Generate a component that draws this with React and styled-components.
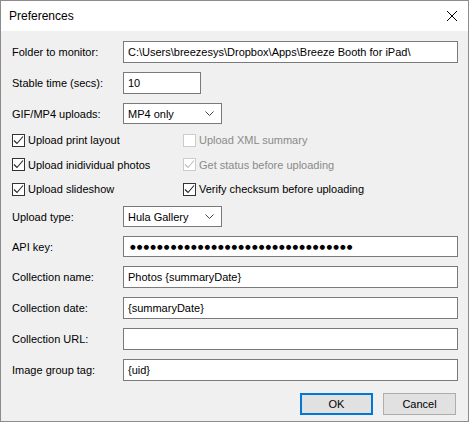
import React from 'react';
import styled, {createGlobalStyle} from 'styled-components';

const GlobalStyle = createGlobalStyle`
  html, body {
    margin: 0;
    padding: 0;
    background: #ffffff;
  }
  body {
    font-family: "Liberation Sans", Arial, sans-serif;
    font-size: 11px;
    color: #000;
  }
`;

const Window = styled.div`
  width: 469px;
  height: 422px;
  box-sizing: border-box;
  border: 1px solid #8c8c8c;
  background: #f0f0f0;
  display: flex;
  flex-direction: column;
`;

const TitleBar = styled.div`
  height: 30px;
  background: #fff;
  display: flex;
  align-items: center;
  justify-content: space-between;
  padding: 0 9px 0 8px;
  font-size: 12px;
  flex-shrink: 0;
`;

const CloseBtn = styled.div`
  width: 12px;
  height: 12px;
  display: flex;
  margin-right: 1px;
`;

const Body = styled.div`
  padding: 10px 10px 0 11px;
  display: flex;
  flex-direction: column;
`;

const Stack = styled.div`
  display: flex;
  flex-direction: column;
  gap: ${p => p.$gap}px;
`;

const Row = styled.div`
  display: grid;
  grid-template-columns: 111px 1fr;
  align-items: center;
  height: ${p => p.$h || 22}px;
`;

const Label = styled.div`
  white-space: nowrap;
`;

const Field = styled.div`
  box-sizing: border-box;
  height: ${p => p.$h || 22}px;
  width: ${p => (p.$w ? `${p.$w}px` : '100%')};
  background: #fff;
  border: 1px solid #7a7a7a;
  display: flex;
  align-items: center;
  padding-left: 4px;
  white-space: nowrap;
  overflow: hidden;
`;

const Select = styled(Field)`
  justify-content: space-between;
  padding-right: 7px;
`;

const Dots = styled.span`
  font-family: "DejaVu Sans", sans-serif;
  font-size: 6.5px;
  letter-spacing: 1.1px;
  padding-left: 2px;
`;

const CheckGrid = styled.div`
  display: grid;
  grid-template-columns: 171px 1fr;
  row-gap: 8.5px;
  margin: 8px 0 9px;
`;

const Check = styled.div`
  display: flex;
  align-items: center;
  gap: 3px;
  height: 16px;
  color: ${p => (p.$disabled ? '#8a8a8a' : '#000')};
`;

const Box = styled.div`
  box-sizing: border-box;
  width: 13px;
  height: 13px;
  background: #fff;
  border: 1px solid ${p => (p.$disabled ? '#cccccc' : '#333333')};
  display: flex;
  align-items: center;
  justify-content: center;
`;

const Buttons = styled.div`
  display: flex;
  justify-content: flex-end;
  gap: 10px;
  margin-top: 12px;
  padding-right: 2px;
`;

const Button = styled.div`
  box-sizing: border-box;
  width: 73px;
  height: 22px;
  background: #e1e1e1;
  border: ${p => (p.$primary ? '2px solid #0078d7' : '1px solid #adadad')};
  display: flex;
  align-items: center;
  justify-content: center;
`;

const Chevron = () => (
  <svg width="9" height="5" viewBox="0 0 9 5">
    <path d="M0.5 0.5 L4.5 4.5 L8.5 0.5" fill="none" stroke="#444" strokeWidth="1" />
  </svg>
);

const Tick = ({disabled}) => (
  <svg width="11" height="11" viewBox="0 0 11 11">
    <path d="M1 5.5 L4 8.5 L10 1.5" fill="none" stroke={disabled ? '#bdbdbd' : '#222'} strokeWidth="1.1" />
  </svg>
);

const CheckItem = ({checked, disabled, children}) => (
  <Check $disabled={disabled}>
    <Box $disabled={disabled}>{checked && <Tick disabled={disabled} />}</Box>
    {children}
  </Check>
);

const TextRow = ({label, value, h, w}) => (
  <Row $h={h}>
    <Label>{label}</Label>
    <Field $h={h} $w={w}>{value}</Field>
  </Row>
);

const SelectRow = ({label, value}) => (
  <Row $h={21}>
    <Label>{label}</Label>
    <Select $h={21} $w={99}>
      {value}
      <Chevron />
    </Select>
  </Row>
);

const App = () => {
  return (
    <>
      <GlobalStyle />
      <Window>
        <TitleBar>
          Preferences
          <CloseBtn>
            <svg width="12" height="12" viewBox="0 0 12 12">
              <path d="M1 1 L11 11 M11 1 L1 11" stroke="#000" strokeWidth="1" />
            </svg>
          </CloseBtn>
        </TitleBar>

        <Body>
          <Stack $gap={9}>
            <TextRow label="Folder to monitor:" value="C:\Users\breezesys\Dropbox\Apps\Breeze Booth for iPad\" />
            <TextRow label="Stable time (secs):" value="10" w={78} />
            <SelectRow label="GIF/MP4 uploads:" value="MP4 only" />
          </Stack>

          <CheckGrid>
            <CheckItem checked>Upload print layout</CheckItem>
            <CheckItem disabled>Upload XML summary</CheckItem>
            <CheckItem checked>Upload inidividual photos</CheckItem>
            <CheckItem checked disabled>Get status before uploading</CheckItem>
            <CheckItem checked>Upload slideshow</CheckItem>
            <CheckItem checked>Verify checksum before uploading</CheckItem>
          </CheckGrid>

          <Stack $gap={9}>
            <SelectRow label="Upload type:" value="Hula Gallery" />
            <TextRow label="API key:" h={21} value={<Dots>{'●'.repeat(33)}</Dots>} />
            <TextRow label="Collection name:" value="Photos {summaryDate}" />
            <TextRow label="Collection date:" value="{summaryDate}" />
            <TextRow label="Collection URL:" value="" />
            <TextRow label="Image group tag:" value="{uid}" />
          </Stack>

          <Buttons>
            <Button $primary>OK</Button>
            <Button>Cancel</Button>
          </Buttons>
        </Body>
      </Window>
    </>
  );
};

export default App;
